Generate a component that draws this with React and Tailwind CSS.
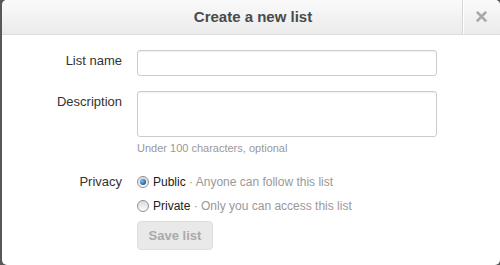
import React from "react";

function Radio({ checked }) {
  return (
    <span className="relative inline-flex h-[12px] w-[12px] shrink-0 items-center justify-center rounded-full border border-[#8f8f8f] bg-gradient-to-b from-[#dcdcdc] to-[#fbfbfb]">
      {checked && (
        <span className="h-[6px] w-[6px] rounded-full bg-[radial-gradient(circle_at_35%_35%,#7fc3f5,#1c5f9e_70%,#123f6e)]" />
      )}
    </span>
  );
}

export default function App() {
  return (
    <div
      className="h-[265px] w-[500px] overflow-hidden bg-[#585858] pl-[2px]"
      style={{ fontFamily: '"Liberation Sans", Arial, sans-serif' }}
    >
      <div className="flex h-[265px] w-[498px] flex-col overflow-hidden rounded-[5px] bg-white">
        <div className="flex h-[35px] shrink-0 border-b border-[#dcdcdc] bg-gradient-to-b from-[#fafafa] to-[#ebebeb]">
          <div className="flex flex-1 items-center justify-center pl-[42px] text-[15px] font-bold text-[#4a4a4a]">
            Create a new list
          </div>
          <div className="flex w-[38px] items-center justify-center border-l border-[#d6d6d6] shadow-[inset_1px_0_0_#ffffff] text-[22px] font-bold leading-none text-[#a8a8a8]">
            ×
          </div>
        </div>
        <div className="flex flex-col pt-[15px] text-[13px] text-[#333]">
          <div className="flex items-start gap-[15px]">
            <div className="w-[120px] pt-[2px] text-right leading-[18px]">List name</div>
            <div className="h-[26px] w-[300px] rounded-[3px] border border-[#cccccc] shadow-[inset_0_1px_1px_rgba(0,0,0,0.06)]" />
          </div>
          <div className="mt-[15px] flex items-start gap-[15px]">
            <div className="w-[120px] pt-[2px] text-right leading-[18px]">Description</div>
            <div className="flex flex-col">
              <div className="h-[46px] w-[300px] rounded-[3px] border border-[#cccccc] shadow-[inset_0_1px_1px_rgba(0,0,0,0.06)]" />
              <div className="mt-[4px] text-[11px] leading-[14px] text-[#999]">Under 100 characters, optional</div>
            </div>
          </div>
          <div className="mt-[18px] flex items-start gap-[15px]">
            <div className="w-[120px] text-right leading-[18px]">Privacy</div>
            <div className="flex flex-col text-[12px]">
              <div className="flex h-[18px] items-center gap-[4px]">
                <Radio checked />
                <span className="text-[#222]">
                  Public <span className="text-[#999]">· Anyone can follow this list</span>
                </span>
              </div>
              <div className="mt-[6px] flex h-[18px] items-center gap-[4px]">
                <Radio />
                <span className="text-[#222]">
                  Private <span className="text-[#999]">· Only you can access this list</span>
                </span>
              </div>
              <div className="mt-[6px] flex h-[29px] w-[76px] items-center justify-center rounded-[4px] border border-[#dedede] bg-[#e9e9e9] text-[13px] font-bold text-[#aaaaaa]">
                Save list
              </div>
            </div>
          </div>
        </div>
      </div>
    </div>
  );
}
